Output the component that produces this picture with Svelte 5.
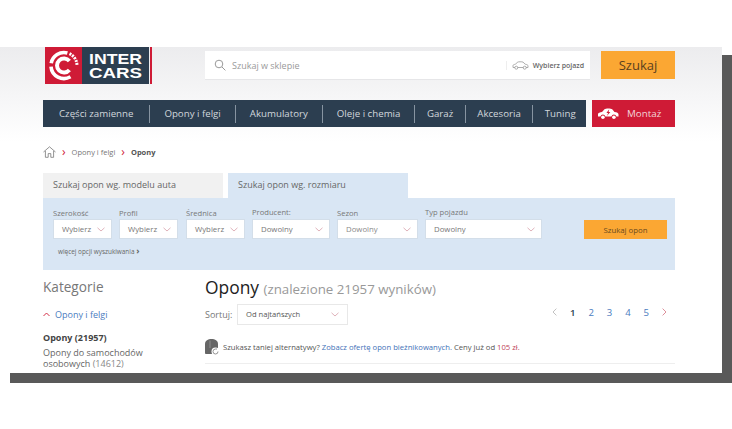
<script>
  const navItems = ['Części zamienne', 'Opony i felgi', 'Akumulatory', 'Oleje i chemia', 'Garaż', 'Akcesoria', 'Tuning'];
  const fields = [
    { label: 'Szerokość', value: 'Wybierz', cls: 'w1' },
    { label: 'Profil', value: 'Wybierz', cls: 'w2' },
    { label: 'Średnica', value: 'Wybierz', cls: 'w2' },
    { label: 'Producent:', value: 'Dowolny', cls: 'w3 up' },
    { label: 'Sezon', value: 'Dowolny', cls: 'w4 faded' },
    { label: 'Typ pojazdu', value: 'Dowolny', cls: 'w5 up' }
  ];
  const pages = [1, 2, 3, 4, 5];
</script>

<div class="frame">
  <div class="page">
    <header class="top">
      <div class="logo">
        <svg width="109" height="37" viewBox="0 0 109 37">
          <rect width="37" height="37" fill="#cf1b36" />
          <rect x="37" width="67" height="37" fill="#2c3e50" />
          <rect x="105" width="2" height="37" fill="#cf1b36" />
          <path d="M25.5 29.8A13 13 0 0 1 6 19.6" fill="none" stroke="#fff" stroke-width="3.6" />
          <path d="M6.2 16.2A13 13 0 0 1 22.4 6" fill="none" stroke="#fff" stroke-width="3.6" />
          <path d="M24.5 6.7A13 13 0 0 1 32 18.5" fill="none" stroke="#fff" stroke-width="3" stroke-dasharray="2 1" />
          <path d="M24.4 14A7 7 0 1 0 24.4 23" fill="none" stroke="#fff" stroke-width="4" />
          <text x="44" y="17" class="logo-text" textLength="53" lengthAdjust="spacingAndGlyphs">INTER</text>
          <text x="44" y="31" class="logo-text" textLength="53" lengthAdjust="spacingAndGlyphs">CARS</text>
        </svg>
      </div>
      <div class="search">
        <svg class="lens" width="12" height="12" viewBox="0 0 12 12">
          <circle cx="5" cy="5" r="3.8" fill="none" stroke="#999" stroke-width="1" />
          <path d="M8 8l3.4 3.4" stroke="#999" stroke-width="1" />
        </svg>
        <span class="placeholder">Szukaj w sklepie</span>
        <div class="vehicle">
          <svg width="17" height="9" viewBox="0 0 17 9">
            <path d="M1 6.5V4.6C1 3.8 2 3.5 3.6 3.2L5.4 1.2C6 .7 10 .6 11 1.1L13.2 3.2C15 3.5 16 3.9 16 5V6.5H14M3 6.5H1M5.6 6.5H11.4" fill="none" stroke="#999" stroke-width=".8" />
            <circle cx="4.3" cy="6.7" r="1.5" fill="none" stroke="#999" stroke-width=".8" />
            <circle cx="12.7" cy="6.7" r="1.5" fill="none" stroke="#999" stroke-width=".8" />
          </svg>
          <span>Wybierz pojazd</span>
        </div>
      </div>
      <button class="search-btn">Szukaj</button>
    </header>

    <nav class="navrow">
      <ul class="menu">
        {#each navItems as item}
          <li>{item}</li>
        {/each}
      </ul>
      <div class="montaz">
        <svg width="21" height="12" viewBox="0 0 21 12">
          <path d="M0 8.5V6C0 5 2 4.4 4 4L6.5 1.2C7.5.2 13 .2 14.2 1.2L16.5 4C19 4.3 20.5 5 20.5 6.5V8.5H18.4A2.6 2.6 0 0 0 13.4 8.5H7.4A2.6 2.6 0 0 0 2.4 8.5Z" fill="#fff" />
          <circle cx="4.9" cy="9.3" r="1.8" fill="#fff" />
          <circle cx="15.9" cy="9.3" r="1.8" fill="#fff" />
          <path d="M11.2 1.2L8.4 5H10.2L8.8 8L12.4 4H10.6Z" fill="#cf1b36" />
        </svg>
        <span>Montaż</span>
      </div>
    </nav>

    <div class="crumbs">
      <svg width="13" height="12" viewBox="0 0 13 12">
        <path d="M.5 6L6.5 .8L12.5 6M2.4 5V11.3H5.2V7.6H7.8V11.3H10.6V5" fill="none" stroke="#777" stroke-width=".8" />
      </svg>
      <span class="arrow">›</span>
      <span>Opony i felgi</span>
      <span class="arrow">›</span>
      <strong>Opony</strong>
    </div>

    <div class="tabs">
      <div class="tab">Szukaj opon wg. modelu auta</div>
      <div class="tab active">Szukaj opon wg. rozmiaru</div>
    </div>

    <section class="filters">
      <div class="filter-row">
        {#each fields as f}
          <div class="field {f.cls}">
            <label>{f.label}</label>
            <div class="select">
              <span>{f.value}</span>
              <svg width="8" height="5" viewBox="0 0 8 5"><path d="M.5 .8L4 4L7.5 .8" fill="none" stroke="#dba9b2" stroke-width=".9" /></svg>
            </div>
          </div>
        {/each}
        <button class="find-btn">Szukaj opon</button>
      </div>
      <div class="more">więcej opcji wyszukiwania <b>›</b></div>
    </section>

    <div class="main">
      <aside class="side">
        <h3>Kategorie</h3>
        <div class="parent">
          <svg width="7" height="5" viewBox="0 0 7 5"><path d="M.5 4L3.5 1L6.5 4" fill="none" stroke="#cf1b36" stroke-width=".9" /></svg>
          <span>Opony i felgi</span>
        </div>
        <div class="current">Opony (21957)</div>
        <div class="sub">Opony do samochodów<br />osobowych <i>(14612)</i></div>
      </aside>
      <div class="results">
        <h1>Opony <small>(znalezione 21957 wyników)</small></h1>
        <div class="sort-row">
          <span class="sort-label">Sortuj:</span>
          <div class="sort-select">
            <span>Od najtańszych</span>
            <svg width="8" height="5" viewBox="0 0 8 5"><path d="M.5 .8L4 4L7.5 .8" fill="none" stroke="#dba9b2" stroke-width=".9" /></svg>
          </div>
          <div class="pager">
            <svg width="5" height="8" viewBox="0 0 5 8"><path d="M4.4 .6L1 4L4.4 7.4" fill="none" stroke="#bbb" stroke-width=".9" /></svg>
            {#each pages as p}
              <span class:on={p === 1}>{p}</span>
            {/each}
            <svg width="5" height="8" viewBox="0 0 5 8"><path d="M.6 .6L4 4L.6 7.4" fill="none" stroke="#d9838f" stroke-width=".9" /></svg>
          </div>
        </div>
        <div class="notice">
          <svg width="15" height="17" viewBox="0 0 15 17">
            <path d="M0 14V5C0 1.5 3 0 6.5 0S13 1.5 13 5V10L8 15H2C.8 15 0 15 0 14Z" fill="#666" />
            <path d="M5 1.5V9" stroke="#999" stroke-width=".8" />
            <circle cx="10.5" cy="12.5" r="4" fill="#fff" />
            <path d="M13 12.5A2.5 2.5 0 1 1 10.5 10L12 10" fill="none" stroke="#888" stroke-width=".9" />
          </svg>
          <p>Szukasz taniej alternatywy? <a href="#oferta">Zobacz ofertę opon bieżnikowanych.</a> Ceny już od <em>105 zł.</em></p>
        </div>
      </div>
    </div>
  </div>
</div>

<style>
  :global(body) {
    margin: 0;
    background: #fff;
  }

  /* dark offset sheet sits behind the white page */
  .frame {
    width: 732px;
    height: 336px;
    margin-top: 47px;
    background: linear-gradient(#595959, #595959) no-repeat 10px 8px / 722px 328px;
  }

  .page {
    box-sizing: border-box;
    width: 722px;
    height: 326px;
    padding: 0 47px 0 43px;
    overflow: hidden;
    background: linear-gradient(#ececee, #fff 95px);
    font-family: "Open Sans", sans-serif;
    color: #555;
  }

  .top {
    display: flex;
    align-items: flex-start;
  }

  .logo {
    width: 162px;
    height: 37px;
    padding-left: 2px;
    box-sizing: border-box;
  }

  .logo svg {
    display: block;
  }

  .logo-text {
    font-family: "Liberation Sans", sans-serif;
    font-weight: 700;
    font-size: 15.5px;
    fill: #fff;
  }

  .search {
    display: flex;
    align-items: center;
    width: 385px;
    height: 29px;
    margin-top: 4px;
    padding: 0 6px 0 9px;
    box-sizing: border-box;
    background: #fff;
    border-bottom: 1px solid #e6e6e8;
  }

  .lens {
    margin-right: 6px;
  }

  .placeholder {
    flex: 1;
    font-size: 9px;
    color: #9a9a9a;
  }

  .vehicle {
    display: flex;
    align-items: center;
    gap: 4px;
    padding-left: 5px;
    border-left: 1px solid #eee;
    font-size: 7px;
    font-weight: 600;
    color: #666;
  }

  .search-btn {
    width: 74px;
    height: 28px;
    margin: 4px 0 0 11px;
    padding: 0;
    border: none;
    background: #fba733;
    color: #5a4020;
    font: 400 13px "Open Sans", sans-serif;
  }

  .navrow {
    display: flex;
    justify-content: space-between;
    margin-top: 16px;
  }

  .menu {
    display: flex;
    align-items: center;
    width: 543px;
    height: 27px;
    margin: 0;
    padding: 0 0 0 2px;
    box-sizing: border-box;
    list-style: none;
    background: #2c3e50;
  }

  .menu li {
    padding: 0 14px;
    border-left: 1px solid #8794a1;
    font-size: 9.7px;
    line-height: 18px;
    color: #d2d7dc;
    white-space: nowrap;
  }

  .menu li:first-child {
    padding-right: 16px;
    border-left: none;
  }

  .menu li:nth-child(5),
  .menu li:nth-child(6),
  .menu li:nth-child(7) {
    padding: 0 11.5px;
  }

  .montaz {
    display: flex;
    align-items: center;
    gap: 8px;
    width: 83px;
    height: 27px;
    padding-left: 6px;
    box-sizing: border-box;
    background: #cf1b36;
    color: #f3d5da;
    font-size: 9.8px;
  }

  .crumbs {
    display: flex;
    align-items: center;
    gap: 5px;
    height: 12px;
    margin-top: 19px;
    font-size: 7.5px;
    color: #777;
  }

  .crumbs strong {
    color: #555;
    font-weight: 700;
  }

  .arrow {
    margin: 0 1px;
    color: #cf1b36;
    font-size: 12px;
    line-height: 10px;
  }

  .tabs {
    display: flex;
    gap: 5px;
    margin-top: 15px;
  }

  .tab {
    width: 180px;
    height: 25px;
    padding-left: 10px;
    box-sizing: border-box;
    background: #f1f1f1;
    font-size: 9px;
    line-height: 24px;
    color: #666;
  }

  .tab.active {
    background: #d9e6f4;
  }

  .filters {
    height: 72px;
    padding: 10px 8px 0 10px;
    box-sizing: border-box;
    background: #d9e6f4;
  }

  .filter-row {
    display: flex;
    align-items: flex-end;
  }

  .field {
    display: flex;
    flex-direction: column;
    margin-right: 7px;
  }

  .field label {
    font-size: 7.6px;
    line-height: 11px;
    color: #777;
  }

  .field.up label {
    position: relative;
    top: -1px;
  }

  .select {
    display: flex;
    align-items: center;
    justify-content: space-between;
    height: 20px;
    padding: 0 6px 0 8px;
    box-sizing: border-box;
    background: #fff;
    border: 1px solid #d3dee9;
    font-size: 7.8px;
    color: #777;
  }

  .w1 { width: 59px; }
  .w2 { width: 59px; }
  .field:nth-child(2) { margin-right: 8px; }
  .w3 { width: 78px; }
  .w4 { width: 81px; }
  .w5 { width: 117px; }

  .faded .select {
    color: #8a8a8a;
  }

  .find-btn {
    width: 83px;
    height: 19px;
    margin-left: 35px;
    padding: 0;
    border: none;
    background: #fba733;
    color: #6a4a20;
    font: 400 7.8px "Open Sans", sans-serif;
  }

  .more {
    margin: 8px 0 0 5px;
    font-size: 6.4px;
    color: #666;
  }

  .more b {
    font-size: 9px;
    line-height: 6px;
  }

  .main {
    display: flex;
    margin-top: 7px;
  }

  .side {
    width: 162px;
    flex: none;
  }

  .side h3 {
    margin: 0;
    font-size: 13.6px;
    font-weight: 400;
    line-height: 20px;
    color: #777;
  }

  .parent {
    display: flex;
    align-items: center;
    gap: 5px;
    margin-top: 11px;
    font-size: 9px;
    line-height: 13px;
    color: #4a7cc0;
  }

  .current {
    margin-top: 10px;
    font-size: 9px;
    font-weight: 700;
    line-height: 13px;
    color: #444;
  }

  .sub {
    margin-top: 3px;
    font-size: 9px;
    line-height: 11px;
    color: #666;
  }

  .sub i {
    font-style: normal;
    color: #888;
  }

  .results {
    flex: 1;
  }

  h1 {
    margin: -1px 0 0;
    font-size: 17.4px;
    font-weight: 400;
    line-height: 22px;
    color: #222;
  }

  h1 small {
    font-size: 13.3px;
    color: #999;
  }

  .sort-row {
    display: flex;
    align-items: center;
    height: 22px;
    margin-top: 3px;
  }

  .sort-label {
    width: 32px;
    font-size: 9px;
    color: #777;
  }

  .sort-select {
    display: flex;
    align-items: center;
    justify-content: space-between;
    width: 111px;
    height: 21px;
    padding: 0 8px;
    box-sizing: border-box;
    background: #fff;
    border: 1px solid #e8e8e8;
    font-size: 7.6px;
    color: #555;
  }

  .pager {
    display: flex;
    align-items: center;
    margin-left: auto;
    margin-right: 8px;
    gap: 12.9px;
    font-size: 9.6px;
    color: #4a7cc0;
    position: relative;
    top: -2px;
  }

  .pager .on {
    color: #2c3e50;
    font-weight: 600;
  }

  .notice {
    display: flex;
    align-items: center;
    gap: 3px;
    height: 28px;
    margin-top: 11px;
    border-bottom: 1px solid #eee;
    padding-bottom: 5px;
    box-sizing: border-box;
  }

  .notice p {
    margin: 0;
    font-size: 7.66px;
    color: #555;
    white-space: nowrap;
  }

  .notice a {
    color: #3f72b8;
    text-decoration: none;
  }

  .notice em {
    font-style: normal;
    color: #c0455a;
  }
</style>
